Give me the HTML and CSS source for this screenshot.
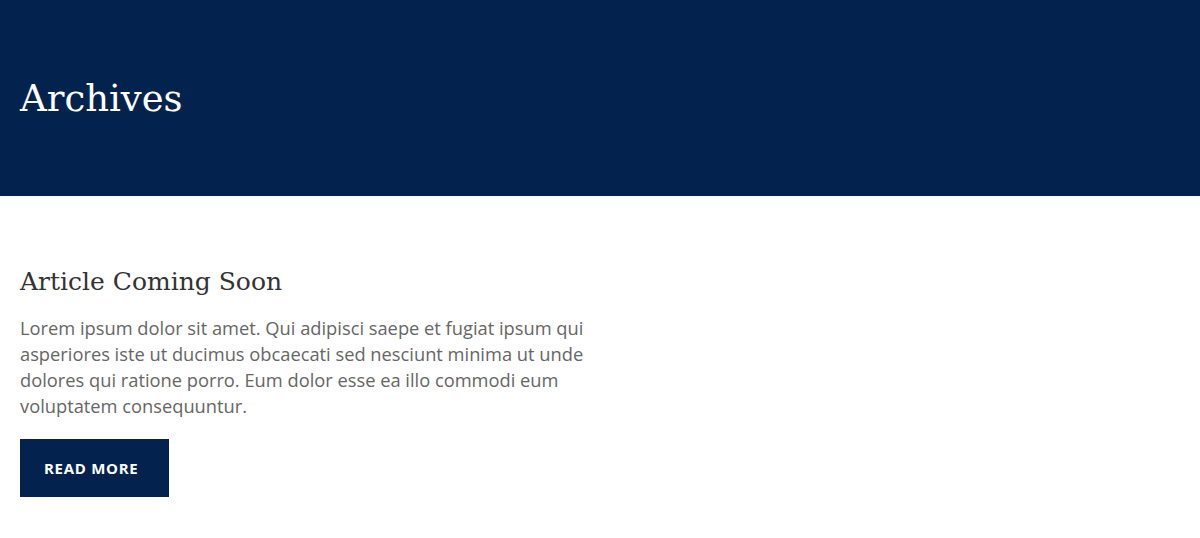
FILE: index.html
```html
<!DOCTYPE html>
<html lang="en">
<head>
<meta charset="utf-8">
<title>Archives</title>
<link rel="stylesheet" href="styles.css">
</head>
<body>
<header class="hero">
  <h1 class="hero-title">Archives</h1>
</header>
<main class="content">
  <article class="post">
    <h2 class="post-title">Article Coming Soon</h2>
    <p class="post-excerpt">Lorem ipsum dolor sit amet. Qui adipisci saepe et fugiat ipsum qui asperiores iste ut ducimus obcaecati sed nesciunt minima ut unde dolores qui ratione porro. Eum dolor esse ea illo commodi eum voluptatem consequuntur.</p>
    <a class="btn" href="#">READ MORE</a>
  </article>
</main>
</body>
</html>
```
FILE: styles.css
```css
html, body {
  margin: 0;
  padding: 0;
  background: #ffffff;
}
body {
  font-family: "Open Sans", "Liberation Sans", sans-serif;
}
.hero {
  background: #03234e;
  height: 196px;
  padding: 0 20px;
  box-sizing: border-box;
  display: flex;
  align-items: center;
}
.hero-title {
  margin: 0;
  font-family: "DejaVu Serif", "Liberation Serif", serif;
  font-weight: normal;
  font-size: 37px;
  color: #ffffff;
}
.content {
  padding: 70px 20px 0;
}
.post {
  width: 600px;
}
.post-title {
  margin: 0 0 16px;
  font-family: "DejaVu Serif", "Liberation Serif", serif;
  font-weight: normal;
  font-size: 25px;
  color: #333333;
  line-height: 1.3;
}
.post-excerpt {
  margin: 0 0 20px;
  font-size: 18.3px;
  line-height: 26px;
  color: #666666;
}
.btn {
  display: inline-block;
  background: #03234e;
  color: #ffffff;
  text-decoration: none;
  font-weight: bold;
  font-size: 15px;
  letter-spacing: 0.7px;
  width: 149px;
  height: 58px;
  line-height: 58px;
  padding-left: 24px;
  text-align: left;
  box-sizing: border-box;
}
```
